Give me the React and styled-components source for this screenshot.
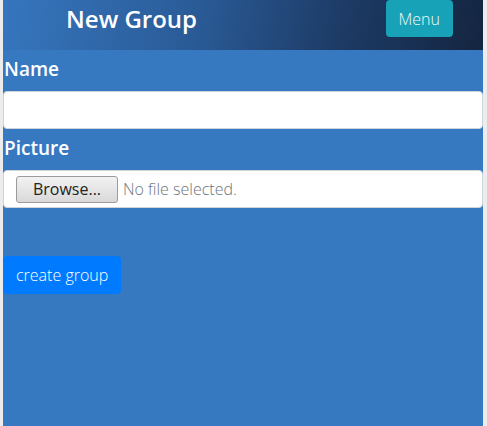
import styled, { createGlobalStyle } from 'styled-components';

const GlobalStyle = createGlobalStyle`
  html, body {
    margin: 0;
    padding: 0;
    background: #ececec;
  }
  body {
    font-family: "Open Sans", "Liberation Sans", sans-serif;
  }
  * {
    box-sizing: border-box;
  }
`;

const Page = styled.div`
  margin: 0 4px 0 3px;
  min-height: 426px;
  background: #3679c1;
`;

const Header = styled.header`
  height: 50px;
  display: flex;
  align-items: flex-start;
  justify-content: space-between;
  padding: 0 30px 0 63px;
  background: linear-gradient(100deg, #3676be 0%, #2a5b97 40%, #1d3b66 70%, #142540 100%);
`;

const Title = styled.h1`
  margin: 0;
  line-height: 38px;
  font-size: 24px;
  font-weight: 600;
  color: #fff;
`;

const MenuButton = styled.button`
  height: 37px;
  padding: 0 13px;
  border: none;
  border-radius: 4px;
  background: #17a2b8;
  color: #f2fbfc;
  font-family: inherit;
  font-size: 16px;
  font-weight: 300;
`;

const Form = styled.form`
  padding-top: 4px;
`;

const Group = styled.div`
  margin-bottom: 4px;
`;

const Label = styled.label`
  display: block;
  margin: 0 0 7px 1px;
  font-size: 19px;
  line-height: 30px;
  font-weight: 600;
  color: #fff;
`;

const TextInput = styled.input`
  display: block;
  width: 100%;
  height: 38px;
  border: 1px solid #ced4da;
  border-radius: 4px;
  background: #fff;
  font-family: inherit;
  font-size: 16px;
  padding: 6px 12px;
`;

const FileBox = styled.div`
  display: flex;
  align-items: center;
  gap: 5px;
  height: 38px;
  padding: 0 12px;
  border: 1px solid #ced4da;
  border-radius: 4px;
  background: #fff;
`;

const BrowseButton = styled.span`
  display: inline-flex;
  align-items: center;
  justify-content: center;
  width: 102px;
  height: 27px;
  border: 1px solid #9c9c9c;
  border-radius: 3px;
  background: linear-gradient(#f2f2f2, #d9d9d9);
  color: #222;
  font-size: 16px;
`;

const FileName = styled.span`
  color: #6c757d;
  font-size: 16px;
  font-weight: 300;
`;

const SubmitButton = styled.button`
  margin-top: 44px;
  padding: 6px 12px;
  border: 1px solid #007bff;
  border-radius: 4px;
  background: #007bff;
  color: #fff;
  font-family: inherit;
  font-size: 16px;
  font-weight: 300;
  line-height: 24px;
`;

export default function App() {
  return (
    <>
      <GlobalStyle />
      <Page>
        <Header>
          <Title>New Group</Title>
          <MenuButton type="button">Menu</MenuButton>
        </Header>
        <Form onSubmit={(e) => e.preventDefault()}>
          <Group>
            <Label htmlFor="name">Name</Label>
            <TextInput id="name" type="text" />
          </Group>
          <Group>
            <Label>Picture</Label>
            <FileBox>
              <BrowseButton>Browse...</BrowseButton>
              <FileName>No file selected.</FileName>
            </FileBox>
          </Group>
          <SubmitButton type="submit">create group</SubmitButton>
        </Form>
      </Page>
    </>
  );
}
